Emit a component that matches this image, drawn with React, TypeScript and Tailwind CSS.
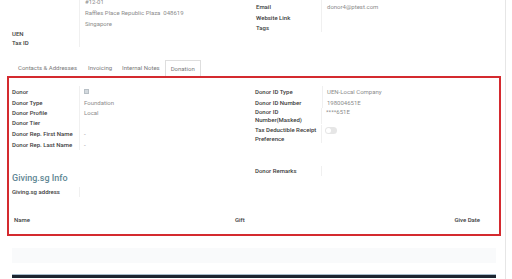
import React from 'react';

const label = 'text-[#3c3c3c] font-medium';
const value = 'text-[#8c8c8c]';

function Row({ name, val, h = 'h-[11px]' }: { name: string; val?: React.ReactNode; h?: string }) {
  return (
    <div className={`flex ${h} items-center`}>
      <div className={`w-[68px] h-full flex items-center border-r border-[#f0f0f0] ${label}`}>{name}</div>
      <div className={`pl-[4px] ${value}`}>{val}</div>
    </div>
  );
}

export default function App() {
  return (
    <div
      className="w-[512px] h-[279px] overflow-hidden bg-white text-[6px] leading-none"
      style={{ fontFamily: 'Roboto, "Liberation Sans", sans-serif' }}
    >
      <div className="w-[506px] h-full border-r border-[#e6e6e6] flex flex-col">
        {/* Top partner fields */}
        <div className="h-[60px] flex overflow-hidden">
          <div className="w-[255px] flex pl-[12px]">
            <div className="w-[68px] h-[47px] border-r border-[#f0f0f0] pt-[29px] flex flex-col">
              <div className={`h-[9px] flex items-center ${label}`}>UEN</div>
              <div className={`h-[9px] flex items-center ${label}`}>Tax ID</div>
            </div>
            <div className={`pl-[5px] -mt-[4px] flex flex-col ${value}`}>
              <div className="h-[11px] flex items-center">#12-01</div>
              <div className="h-[11px] flex items-center">Raffles Place Republic Plaza&nbsp;&nbsp;048619</div>
              <div className="h-[12px] flex items-center">Singapore</div>
            </div>
          </div>
          <div className="flex-1 flex pl-[1px]">
            <div className="w-[66px] h-[38px] border-r border-[#f0f0f0] -mt-[6px] flex flex-col">
              <div className={`h-[8px] flex items-center ${label}`}>Mobile</div>
              <div className={`h-[10px] flex items-center ${label}`}>Email</div>
              <div className={`h-[11px] flex items-center ${label}`}>Website Link</div>
              <div className={`h-[9px] flex items-center ${label}`}>Tags</div>
            </div>
            <div className={`pl-[5px] -mt-[6px] ${value}`}>
              <div className="h-[8px]" />
              <div className="h-[10px] flex items-center">donor4@ptest.com</div>
            </div>
          </div>
        </div>

        {/* Tabs */}
        <div className="h-[16px] flex pl-[12px] text-[#7a7a7a]">
          <div className="px-[6px] flex items-center">Contacts &amp; Addresses</div>
          <div className="px-[5px] flex items-center">Invoicing</div>
          <div className="px-[5px] flex items-center">Internal Notes</div>
          <div className="px-[5px] flex items-center border border-b-0 border-[#dedede] bg-white">Donation</div>
        </div>

        {/* Donation tab content */}
        <div className="ml-[7px] w-[494px] h-[160px] border-2 border-[#d42a2f] flex flex-col">
          <div className="flex pt-[8px]">
            <div className="w-[246px] pl-[3px] flex flex-col">
              <Row
                name="Donor"
                val={<div className="w-[5px] h-[5px] bg-[#d3d9de] border border-[#b8c0c6]" />}
              />
              <Row name="Donor Type" val="Foundation" />
              <Row name="Donor Profile" val="Local" h="h-[10px]" />
              <Row name="Donor Tier" h="h-[10px]" />
              <Row name="Donor Rep. First Name" val="-" />
              <Row name="Donor Rep. Last Name" val="-" />
              <div className="mt-[22px] h-[12px] flex items-center text-[9px] font-medium text-[#5f8795]">
                Giving.sg Info
              </div>
              <div className="mt-[3px]">
                <Row name="Giving.sg address" h="h-[10px]" />
              </div>
            </div>
            <div className="flex-1 flex flex-col">
              <Row name="Donor ID Type" val="UEN-Local Company" />
              <Row name="Donor ID Number" val="198004651E" />
              <div className="flex h-[16px]">
                <div className={`w-[67px] border-r border-[#f0f0f0] leading-[8px] ${label}`}>
                  Donor ID<br />Number(Masked)
                </div>
                <div className={`pl-[4px] h-[8px] flex items-center ${value}`}>****651E</div>
              </div>
              <div className="flex h-[19px] pt-[1px]">
                <div className={`w-[67px] border-r border-[#f0f0f0] leading-[9px] ${label}`}>
                  Tax Deductible Receipt<br />Preference
                </div>
                <div className="pl-[3px] pt-[2px]">
                  <div className="w-[12px] h-[7px] rounded-full bg-[#e6e6e6] flex items-center pl-[1px]">
                    <div className="w-[5px] h-[5px] rounded-full bg-white" />
                  </div>
                </div>
              </div>
              <div className="mt-[23px] flex h-[10px]">
                <div className={`w-[67px] border-r border-[#f0f0f0] flex items-center ${label}`}>Donor Remarks</div>
              </div>
            </div>
          </div>

          <div className={`mt-[18px] h-[10px] flex items-center pl-[5px] pr-[19px] ${label}`}>
            <div className="w-[221px]">Name</div>
            <div className="flex-1">Gift</div>
            <div>Give Date</div>
          </div>
        </div>

        <div className="mt-[12px] ml-[12px] w-[484px] h-[15px] bg-[#f9fafb]" />
        <div className="mt-[11px] ml-[12px] w-[484px] h-[4px] bg-[#1c2530] border-t border-[#a9bccb]" />
      </div>
    </div>
  );
}
